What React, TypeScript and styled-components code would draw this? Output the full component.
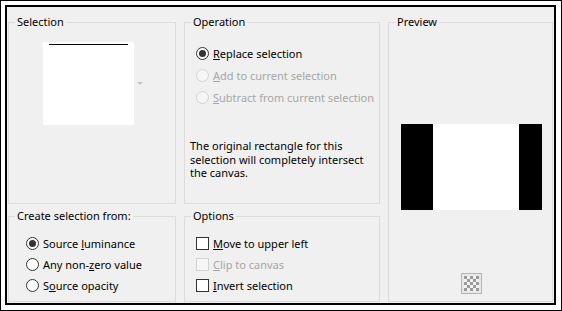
import React from 'react';
import styled, { createGlobalStyle } from 'styled-components';

const Global = createGlobalStyle`
  html, body { margin: 0; padding: 0; background: #fff; }
  body { font-family: "Noto Sans", "Segoe UI", sans-serif; }
`;

const Outer = styled.div`
  width: 562px;
  height: 311px;
  box-sizing: border-box;
  border: 1px solid #000;
  padding: 4px 5px 5px 4px;
  background: #fff;
`;

const Frame = styled.div`
  width: 551px;
  height: 300px;
  box-sizing: border-box;
  border: 2px solid #000;
  background: #f0f0f0;
  display: grid;
  grid-template-columns: 168px 196px 165px;
  grid-template-rows: 190px 94px;
  column-gap: 8px;
  row-gap: 4px;
  padding: 7px 0 0 1px;
  align-content: start;
  font-family: "Noto Sans", "Segoe UI", sans-serif;
  font-size: 11px;
  color: #000;
`;

const Group = styled.fieldset<{ $col: number; $row: string }>`
  margin: 0;
  padding: 0;
  min-width: 0;
  border: 1px solid #dcdcdc;
  box-sizing: border-box;
  grid-column: ${p => p.$col};
  grid-row: ${p => p.$row};
  display: flex;
  flex-direction: column;
`;

const Legend = styled.legend`
  margin-left: 6px;
  padding: 0 2px;
  line-height: 16px;
  font-size: 11px;
  color: #000;
`;

const ChoiceList = styled.div<{ $top: number; $left: number; $row: number }>`
  display: flex;
  flex-direction: column;
  margin-top: ${p => p.$top}px;
  padding-left: ${p => p.$left}px;
  & > * { height: ${p => p.$row}px; }
`;

const Choice = styled.div<{ $disabled?: boolean }>`
  display: flex;
  align-items: center;
  gap: 4px;
  white-space: nowrap;
  color: ${p => (p.$disabled ? '#a6a6a6' : '#000')};
  u { text-decoration: underline; text-underline-offset: 1px; }
`;

const RadioMark = styled.span<{ $checked?: boolean; $disabled?: boolean }>`
  flex: none;
  width: 13px;
  height: 13px;
  box-sizing: border-box;
  border-radius: 50%;
  border: 1px solid ${p => (p.$disabled ? '#d2d2d2' : '#333')};
  background: ${p => (p.$disabled ? '#f6f6f6' : '#fff')};
  display: flex;
  align-items: center;
  justify-content: center;
  &::after {
    content: '';
    display: ${p => (p.$checked ? 'block' : 'none')};
    width: 7px;
    height: 7px;
    border-radius: 50%;
    background: #333;
  }
`;

const CheckMark = styled.span<{ $disabled?: boolean }>`
  flex: none;
  width: 13px;
  height: 13px;
  box-sizing: border-box;
  border: 1px solid ${p => (p.$disabled ? '#d2d2d2' : '#333')};
  background: ${p => (p.$disabled ? '#f6f6f6' : '#fff')};
`;

const Description = styled.p`
  margin: 31px 0 0 5px;
  line-height: 13.5px;
  width: 176px;
`;

const ThumbRow = styled.div`
  display: flex;
  align-items: center;
  margin: 12px 0 0 34px;
`;

const Thumb = styled.div`
  width: 91px;
  height: 83px;
  background: #fff;
  box-sizing: border-box;
  padding: 2px 6px 0;
`;

const ThumbLine = styled.div`
  height: 1px;
  background: #000;
`;

const DropArrow = styled.span`
  margin-left: 3px;
  width: 0;
  height: 0;
  border-left: 3px solid transparent;
  border-right: 3px solid transparent;
  border-top: 3px solid #c4c4c4;
`;

const PreviewImage = styled.div`
  display: flex;
  margin: 94px 0 0 12px;
  height: 86px;
`;

const PreviewBand = styled.div<{ $w: number; $c: string }>`
  width: ${p => p.$w}px;
  background: ${p => p.$c};
`;

const CheckerButton = styled.div`
  align-self: center;
  margin-top: 63px;
  margin-left: 2px;
  width: 21px;
  height: 21px;
  box-sizing: border-box;
  border: 1px solid #b4b4b4;
  background: #e8e8e8;
  display: flex;
  align-items: center;
  justify-content: center;
`;

const Checker = () => (
  <svg width="15" height="15" viewBox="0 0 15 15">
    <rect width="15" height="15" fill="#f2f2f2" />
    {Array.from({ length: 5 }).flatMap((_, r) =>
      Array.from({ length: 5 }).map((__, c) =>
        (r + c) % 2 === 0 ? (
          <rect key={`${r}-${c}`} x={c * 3} y={r * 3} width="3" height="3" fill="#9a9a9a" />
        ) : null
      )
    )}
  </svg>
);

export default function App() {
  return (
    <>
      <Global />
      <Outer>
        <Frame>
          <Group $col={1} $row="1">
            <Legend>Selection</Legend>
            <ThumbRow>
              <Thumb>
                <ThumbLine />
              </Thumb>
              <DropArrow />
            </ThumbRow>
          </Group>

          <Group $col={2} $row="1">
            <Legend>Operation</Legend>
            <ChoiceList $top={12} $left={11} $row={22}>
              <Choice>
                <RadioMark $checked />
                <span><u>R</u>eplace selection</span>
              </Choice>
              <Choice $disabled>
                <RadioMark $disabled />
                <span><u>A</u>dd to current selection</span>
              </Choice>
              <Choice $disabled>
                <RadioMark $disabled />
                <span><u>S</u>ubtract from current selection</span>
              </Choice>
            </ChoiceList>
            <Description>
              The original rectangle for this selection will completely intersect the canvas.
            </Description>
          </Group>

          <Group $col={3} $row="1 / 3">
            <Legend>Preview</Legend>
            <PreviewImage>
              <PreviewBand $w={32} $c="#000" />
              <PreviewBand $w={86} $c="#fff" />
              <PreviewBand $w={23} $c="#000" />
            </PreviewImage>
            <CheckerButton>
              <Checker />
            </CheckerButton>
          </Group>

          <Group $col={1} $row="2">
            <Legend>Create selection from:</Legend>
            <ChoiceList $top={9} $left={17} $row={21}>
              <Choice>
                <RadioMark $checked />
                <span>Source <u>l</u>uminance</span>
              </Choice>
              <Choice>
                <RadioMark />
                <span>Any non-<u>z</u>ero value</span>
              </Choice>
              <Choice>
                <RadioMark />
                <span>S<u>o</u>urce opacity</span>
              </Choice>
            </ChoiceList>
          </Group>

          <Group $col={2} $row="2">
            <Legend>Options</Legend>
            <ChoiceList $top={9} $left={11} $row={21}>
              <Choice>
                <CheckMark />
                <span><u>M</u>ove to upper left</span>
              </Choice>
              <Choice $disabled>
                <CheckMark $disabled />
                <span><u>C</u>lip to canvas</span>
              </Choice>
              <Choice>
                <CheckMark />
                <span><u>I</u>nvert selection</span>
              </Choice>
            </ChoiceList>
          </Group>
        </Frame>
      </Outer>
    </>
  );
}
